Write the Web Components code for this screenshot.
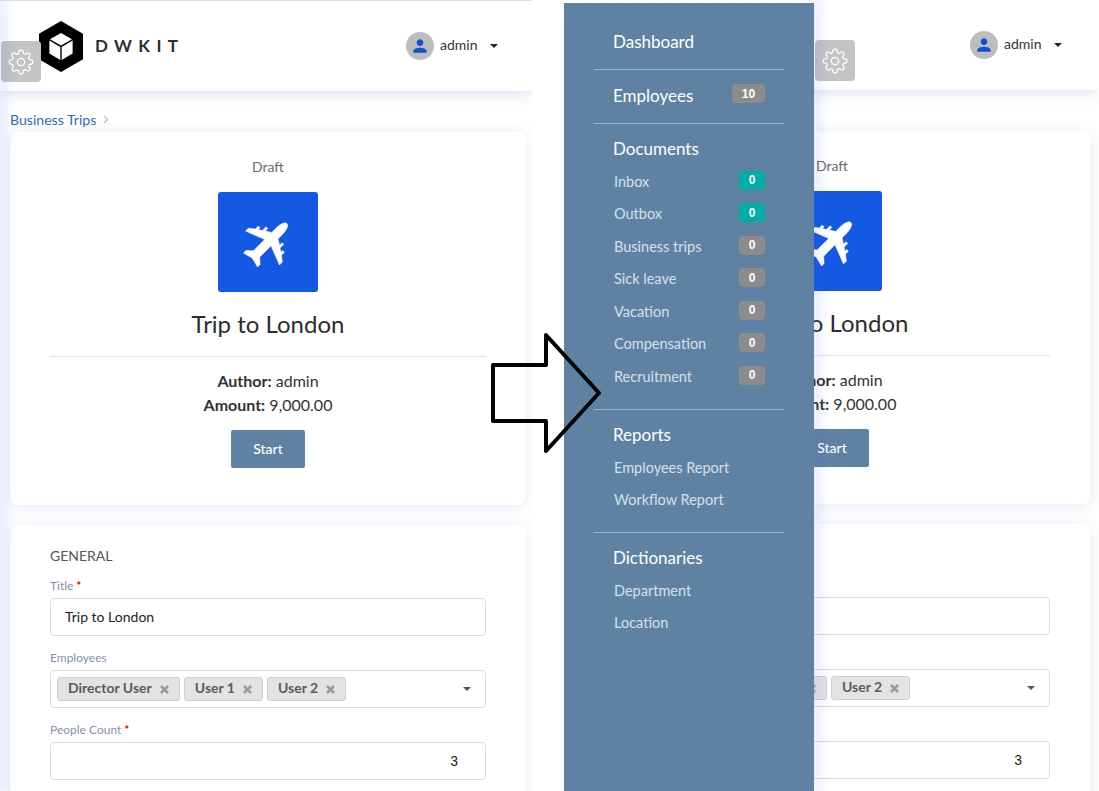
<!DOCTYPE html>
<html>
<head>
<meta charset="utf-8">
<title>DWKit</title>
<style>
  html,body{margin:0;height:100%;overflow:hidden;background:#fff;}
  body{font-family:"Lato","Liberation Sans",sans-serif;color:#333;}
  .page{display:flex;gap:32px;position:relative;height:791px;overflow:hidden;}
</style>
</head>
<body>
<div class="page">
  <app-screen closed>
    <trip-page></trip-page>
  </app-screen>
  <app-screen open>
    <side-menu slot="menu">
      <menu-link top>Dashboard</menu-link>
      <menu-line></menu-line>
      <menu-link top count="10">Employees</menu-link>
      <menu-line></menu-line>
      <menu-head>Documents</menu-head>
      <menu-link count="0" tone="teal">Inbox</menu-link>
      <menu-link count="0" tone="teal">Outbox</menu-link>
      <menu-link count="0">Business trips</menu-link>
      <menu-link count="0">Sick leave</menu-link>
      <menu-link count="0">Vacation</menu-link>
      <menu-link count="0">Compensation</menu-link>
      <menu-link count="0">Recruitment</menu-link>
      <menu-line end></menu-line>
      <menu-head>Reports</menu-head>
      <menu-link>Employees Report</menu-link>
      <menu-link>Workflow Report</menu-link>
      <menu-line end></menu-line>
      <menu-head>Dictionaries</menu-head>
      <menu-link>Department</menu-link>
      <menu-link>Location</menu-link>
    </side-menu>
    <trip-page covered></trip-page>
  </app-screen>
  <flow-arrow></flow-arrow>
</div>

<script>
class appScreen extends HTMLElement{
    constructor(){
        super()
        this.attachShadow({mode:'open'});
    }
    connectedCallback(){
        const open=this.hasAttribute('open');
        this.shadowRoot.innerHTML=`
          <style>
          :host{
            display:block;
            flex:0 0 ${open?'534px':'532px'};
            height:791px;
            overflow:hidden;
            box-sizing:border-box;
            ${open?'':'border-top:1px solid #d9dde5;'}
          }
          .main{position:relative;height:100%;overflow:hidden;}
          .edge{
            position:absolute;top:0;bottom:0;left:${open?'250px':'0'};width:0;
            box-shadow:0 0 14px 3px rgba(70,100,225,.28);
          }
          </style>
          <div class="main">
            <app-header gear-left="${open?251:1}" ${open?'covered':''}></app-header>
            <slot></slot>
            <div class="edge"></div>
            <slot name="menu"></slot>
          </div>`;
    }
}
customElements.define('app-screen',appScreen);

class appHeader extends HTMLElement{
    constructor(){
        super()
        this.attachShadow({mode:'open'});
    }
    connectedCallback(){
        this.shadowRoot.innerHTML=`
          <style>
          :host{
            display:flex;
            align-items:center;
            height:90px;
            box-sizing:border-box;
            padding-left:39px;
            background:#fff;
            box-shadow:0 2px 14px rgba(70,90,170,.2);
            position:relative;
          }
          .logo{display:flex;align-items:center;gap:12px;flex:0 0 367px;}
          .logo span{font-size:17px;font-weight:700;letter-spacing:6.4px;color:#2e2e2e;margin-top:-1px;}
          :host([covered]) .logo span{visibility:hidden;}
          .gear{
            position:absolute;top:40px;left:${this.getAttribute('gear-left')}px;
            width:40px;height:41px;background:#c4c4c4;border-radius:4px;
            display:flex;align-items:center;justify-content:center;
          }
          .user{display:flex;align-items:center;font-size:14px;color:#333;margin-top:-1px;}
          .user span{margin-top:-2px;}
          .avatar{width:28px;height:28px;border-radius:50%;background:#bdbdbd;display:flex;align-items:center;justify-content:center;margin-right:6px;}
          .caret{width:0;height:0;border:4px solid transparent;border-top:4px solid #222;border-bottom:0;margin-left:12px;}
          </style>
          <div class="logo">
            <svg width="44" height="51" viewBox="0 0 44 51">
              <polygon points="22,0 44,12.7 44,38.3 22,51 0,38.3 0,12.7" fill="#000"/>
              <polygon points="22,12 33,18.3 22,24.6 11,18.3" fill="#fff"/>
              <polygon points="10.4,19.6 21.3,25.9 21.3,39 10.4,32.6" fill="#fff"/>
              <polygon points="33.6,19.6 22.7,25.9 22.7,39 33.6,32.6" fill="#fff"/>
            </svg>
            <span>DWKIT</span>
          </div>
          <div class="gear">
            <svg width="26" height="26" viewBox="0 0 24 24" fill="none" stroke="#fff" stroke-width="1.2" stroke-linejoin="round">
              <circle cx="12" cy="12" r="3.4"/>
              <path d="M19.4 15a1.65 1.65 0 0 0 .33 1.82l.06.06a2 2 0 0 1 0 2.83 2 2 0 0 1-2.83 0l-.06-.06a1.65 1.65 0 0 0-1.82-.33 1.65 1.65 0 0 0-1 1.51V21a2 2 0 0 1-2 2 2 2 0 0 1-2-2v-.09A1.65 1.65 0 0 0 9 19.4a1.65 1.65 0 0 0-1.82.33l-.06.06a2 2 0 0 1-2.83 0 2 2 0 0 1 0-2.83l.06-.06a1.65 1.65 0 0 0 .33-1.82 1.65 1.65 0 0 0-1.51-1H3a2 2 0 0 1-2-2 2 2 0 0 1 2-2h.09A1.65 1.65 0 0 0 4.6 9a1.65 1.65 0 0 0-.33-1.82l-.06-.06a2 2 0 0 1 0-2.83 2 2 0 0 1 2.83 0l.06.06a1.65 1.65 0 0 0 1.82.33H9a1.65 1.65 0 0 0 1-1.51V3a2 2 0 0 1 2-2 2 2 0 0 1 2 2v.09a1.65 1.65 0 0 0 1 1.51 1.65 1.65 0 0 0 1.82-.33l.06-.06a2 2 0 0 1 2.83 0 2 2 0 0 1 0 2.83l-.06.06a1.65 1.65 0 0 0-.33 1.82V9a1.65 1.65 0 0 0 1.51 1H21a2 2 0 0 1 2 2 2 2 0 0 1-2 2h-.09a1.65 1.65 0 0 0-1.51 1z"/>
            </svg>
          </div>
          <div class="user">
            <div class="avatar">
              <svg width="20" height="20" viewBox="0 0 24 24" fill="#0f4fd0"><path d="M12 12c2.2 0 4-1.8 4-4s-1.800-4-4-4-4 1.800-4 4 1.800 4 4 4zm0 2c-2.700 0-8 1.300-8 4v2h16v-2c0-2.700-5.300-4-8-4z"/></svg>
            </div>
            <span>admin</span>
            <div class="caret"></div>
          </div>`;
    }
}
customElements.define('app-header',appHeader);

class tripPage extends HTMLElement{
    constructor(){
        super()
        this.attachShadow({mode:'open'});
    }
    connectedCallback(){
        const covered=this.hasAttribute('covered')?'covered':'';
        this.shadowRoot.innerHTML=`
          <style>
          :host{display:block;padding:0 0 0 10px;width:516px;}
          .crumb{height:41px;display:flex;align-items:flex-end;font-size:14.1px;line-height:20px;color:#2b6cb5;gap:7px;box-sizing:border-box;padding-bottom:2px;}
          .crumb svg{margin-bottom:6px;}
          :host([covered]) .crumb,:host([covered]) .form h2{visibility:hidden;}
          .card{background:#fff;border-radius:8px;box-shadow:0 2px 16px rgba(70,90,190,.13);box-sizing:border-box;}
          .summary{
            display:flex;flex-direction:column;align-items:center;
            padding:25px 40px 37px;
            margin-bottom:20px;
            height:373px;
          }
          .state{font-size:14px;line-height:20px;color:#6b6b6b;}
          .pic{width:100px;height:100px;margin-top:15px;background:#1359e2;border-radius:3px;display:flex;align-items:center;justify-content:center;}
          .pic svg{overflow:visible;}
          h1{font-size:24px;line-height:30px;font-weight:400;color:#2d2d2d;margin:17px 0 0;}
          hr{align-self:stretch;border:0;border-top:1px solid #e2e2e2;margin:17px 0 12px;}
          .info{font-size:16px;line-height:24px;color:#333;}
          .info b{font-weight:700;}
          button{
            font:500 14px "Lato","Liberation Sans",sans-serif;
            margin-top:13px;width:74px;height:38px;border:0;border-radius:2px;background:#5f82a3;color:#fff;padding:0 0 2px;
          }
          .form{padding:21px 40px 0;height:400px;}
          .form h2{font-size:14px;line-height:20px;font-weight:400;color:#555;margin:0 0 12px;}
          </style>
          <div class="crumb"><span>Business Trips</span>
            <svg width="6" height="9" viewBox="0 0 6 9" fill="none" stroke="#b5b5b5" stroke-width="1.100"><path d="M1 .8 4.600 4.500 1 8.200"/></svg>
          </div>
          <div class="card summary">
            <div class="state">Draft</div>
            <div class="pic">
              <svg width="46" height="46" viewBox="0 0 46 46" fill="#fff" stroke="#fff" stroke-width=".5" stroke-linejoin="round">
                <g transform="translate(20 26.5) rotate(45)">
                  <path d="M0-31C2.800-31 4.500-26 4.500-20V-14L10-10.500V-14H12.500V-8.800L16-6.500V-9H18.500V-4.800L24-.5V3.500L4.500-4V12L10 17V20.500L0 18L-10 20.500V17L-4.500 12V-4L-24 3.500V-.5L-18.500-4.800V-9H-16V-6.500L-12.500-8.800V-14H-10V-10.500L-4.500-14V-20C-4.500-26-2.800-31 0-31Z"/>
                </g>
              </svg>
            </div>
            <h1>Trip to London</h1>
            <hr>
            <div class="info"><b>Author:</b> admin</div>
            <div class="info"><b>Amount:</b> 9,000.00</div>
            <button>Start</button>
          </div>
          <div class="card form">
            <h2>GENERAL</h2>
            <form-field label="Title" required value="Trip to London" ${covered}></form-field>
            <form-field label="Employees" kind="tags" ${covered}></form-field>
            <form-field label="People Count" required kind="number" value="3" ${covered}></form-field>
          </div>`;
    }
}
customElements.define('trip-page',tripPage);

class formField extends HTMLElement{
    constructor(){
        super()
        this.attachShadow({mode:'open'});
    }
    getBody(){
        const kind=this.getAttribute('kind');
        const value=this.getAttribute('value')||'';
        const covered=this.hasAttribute('covered')?'covered':'';
        if(kind==='tags'){
            return `
              <div class="box tags">
                <tag-chip ${covered}>Director User</tag-chip>
                <tag-chip ${covered}>User 1</tag-chip>
                <tag-chip>User 2</tag-chip>
                <i class="caret"></i>
              </div>`;
        }
        if(kind==='number'){
            return `<div class="box num">${value}</div>`;
        }
        return `<div class="box"><span class="val">${value}</span></div>`;
    }
    connectedCallback(){
        this.shadowRoot.innerHTML=`
          <style>
          :host{display:block;margin-bottom:14px;}
          label{display:block;font-size:12px;line-height:16px;color:#8492a8;margin-bottom:4px;}
          :host([covered]) label,:host([covered]) .val{visibility:hidden;}
          em{color:#e00000;font-style:normal;font-weight:700;font-size:11px;}
          .box{
            height:38px;box-sizing:border-box;border:1px solid #dcdcdc;border-radius:4px;
            display:flex;align-items:center;padding:0 14px 2px;font-size:14px;color:#222;background:#fff;
          }
          .tags{padding:0 6px;gap:4px;}
          .num{justify-content:flex-end;padding:0 27px 0 0;font-family:"Liberation Sans",sans-serif;}
          .caret{width:0;height:0;border:4px solid transparent;border-top:4px solid #555;border-bottom:0;margin-left:auto;margin-right:8px;}
          </style>
          <label>${this.getAttribute('label')}${this.hasAttribute('required')?' <em>*</em>':''}</label>
          ${this.getBody()}`;
    }
}
customElements.define('form-field',formField);

class tagChip extends HTMLElement{
    constructor(){
        super()
        this.attachShadow({mode:'open'});
        this.shadowRoot.innerHTML=`
          <style>
          :host{
            display:inline-flex;align-items:center;gap:8px;height:24px;box-sizing:border-box;
            padding:0 10px 3px;background:#e3e3e3;border:1px solid #cfcfcf;border-radius:3px;
            font-size:14px;font-weight:700;color:#5a5a5a;
          }
          :host([covered]) .txt{visibility:hidden;}
          svg{display:block;margin-top:3px;}
          </style>
          <span class="txt"><slot></slot></span>
          <svg width="9" height="9" viewBox="0 0 9 9" stroke="#9a9a9a" stroke-width="2.600"><path d="M1 1l7 7M8 1 1 8"/></svg>`;
    }
}
customElements.define('tag-chip',tagChip);

class sideMenu extends HTMLElement{
    constructor(){
        super()
        this.attachShadow({mode:'open'});
        this.shadowRoot.innerHTML=`
          <style>
          :host{
            display:block;position:absolute;top:3px;left:0;bottom:0;width:250px;box-sizing:border-box;
            padding:26px 30px 0;background:#5f82a3;
          }
          </style>
          <slot></slot>`;
    }
}
customElements.define('side-menu',sideMenu);

class menuLine extends HTMLElement{
    constructor(){
        super()
        this.attachShadow({mode:'open'});
        this.shadowRoot.innerHTML=`
          <style>
          :host{display:block;height:1px;background:#9db3c8;margin:14px 0 13px;}
          :host([end]){margin-top:16.200px;}
          </style>`;
    }
}
customElements.define('menu-line',menuLine);

class menuHead extends HTMLElement{
    constructor(){
        super()
        this.attachShadow({mode:'open'});
        this.shadowRoot.innerHTML=`
          <style>
          :host{display:block;font-size:17px;line-height:24px;color:#fff;padding-left:19px;margin-bottom:4.100px;}
          </style>
          <slot></slot>`;
    }
}
customElements.define('menu-head',menuHead);

class menuLink extends HTMLElement{
    constructor(){
        super()
        this.attachShadow({mode:'open'});
    }
    connectedCallback(){
        const count=this.getAttribute('count');
        const teal=this.getAttribute('tone')==='teal';
        const wide=count!==null&&count.length>1;
        this.shadowRoot.innerHTML=`
          <style>
          :host{
            display:flex;align-items:center;justify-content:space-between;
            height:32.500px;font-size:14.500px;color:#d5e0ea;padding:0 19px 0 20px;
          }
          :host([top]){height:26px;font-size:17px;color:#fff;box-sizing:border-box;padding:0 19px 2px 19px;}
          .badge{
            font:700 12px "Liberation Sans",sans-serif;color:#fff;
            height:19px;width:${wide?33:26}px;box-sizing:border-box;border-radius:4px;
            display:flex;align-items:center;justify-content:center;margin-top:-2px;
            background:${teal?'#00ada7':'#8c8c8c'};
          }
          :host([top]) .badge{margin-top:-3px;}
          </style>
          <slot></slot>
          ${count!==null?`<span class="badge">${count}</span>`:''}`;
    }
}
customElements.define('menu-link',menuLink);

class flowArrow extends HTMLElement{
    constructor(){
        super()
        this.attachShadow({mode:'open'});
        this.shadowRoot.innerHTML=`
          <style>
          :host{position:absolute;left:488px;top:330px;width:116px;height:126px;display:block;}
          svg{display:block;}
          </style>
          <svg width="116" height="126" viewBox="0 0 116 126" fill="none" stroke="#000" stroke-width="4" stroke-linejoin="round">
            <path d="M5 35H58V5L111 63 58 121V91H5Z"/>
          </svg>`;
    }
}
customElements.define('flow-arrow',flowArrow);
</script>
</body>
</html>
